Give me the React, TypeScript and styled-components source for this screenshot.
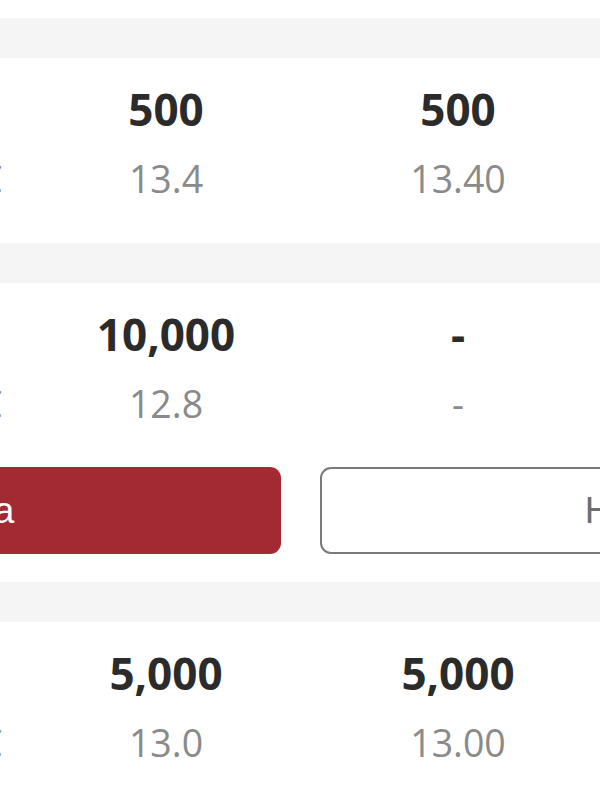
import React from 'react';
import styled, { createGlobalStyle } from 'styled-components';

const GlobalStyle = createGlobalStyle`
  html, body {
    margin: 0;
    padding: 0;
    background: #ffffff;
    overflow: hidden;
  }
  body {
    font-family: 'Open Sans', 'Noto Sans', sans-serif;
  }
`;

// 호가 행 데이터
interface IQuote {
  label: string;
  qtyA: string;
  priceA: string;
  qtyB: string;
  priceB: string;
}

const quotes: IQuote[] = [
  { label: 'Precio €', qtyA: '500', priceA: '13.4', qtyB: '500', priceB: '13.40' },
  { label: 'Precio €', qtyA: '10,000', priceA: '12.8', qtyB: '-', priceB: '-' },
  { label: 'Precio €', qtyA: '5,000', priceA: '13.0', qtyB: '5,000', priceB: '13.00' },
];

const QuoteRow: React.FC<{ quote: IQuote; bottom: number }> = ({ quote, bottom }) => (
  <SRow $bottom={bottom}>
    <LabelCell>
      <Primary />
      <Secondary>{quote.label}</Secondary>
    </LabelCell>
    <Cell>
      <Primary>{quote.qtyA}</Primary>
      <Secondary>{quote.priceA}</Secondary>
    </Cell>
    <Cell>
      <Primary>{quote.qtyB}</Primary>
      <Secondary>{quote.priceB}</Secondary>
    </Cell>
  </SRow>
);

const App = () => {
  return (
    <Page>
      <GlobalStyle />
      <Band />
      <QuoteRow quote={quotes[0]} bottom={36} />
      <Band />
      <QuoteRow quote={quotes[1]} bottom={35} />
      <ButtonRow>
        <ActionButton $variant="solid">Compra</ActionButton>
        <ActionButton $variant="outline">Historial</ActionButton>
      </ButtonRow>
      <Band />
      <QuoteRow quote={quotes[2]} bottom={36} />
    </Page>
  );
};

const Page = styled.main`
  width: 600px;
  min-height: 800px;
  padding-top: 18px;
  overflow: hidden;
  background: #ffffff;
`;

const Band = styled.div`
  height: 40px;
  background-color: #f5f5f5;
`;

const SRow = styled.section<{ $bottom: number }>`
  display: grid;
  grid-template-columns: 20px 292px 292px;
  padding: 23px 0 ${(p) => p.$bottom}px;
`;

const Cell = styled.div`
  display: flex;
  flex-direction: column;
  align-items: center;
  white-space: nowrap;
`;

const LabelCell = styled(Cell)`
  align-items: flex-end;
  padding-right: 18px;
  min-width: 0;
`;

const Primary = styled.div`
  height: 56px;
  line-height: 56px;
  font-size: 44px;
  font-weight: 700;
  color: #2b2b2b;
`;

const Secondary = styled.div`
  margin-top: 14px;
  height: 56px;
  line-height: 56px;
  font-size: 37.5px;
  font-weight: 400;
  color: #8a8a8a;
`;

const ButtonRow = styled.div`
  display: flex;
  justify-content: center;
  gap: 39px;
  margin-bottom: 28px;
`;

const ActionButton = styled.button<{ $variant: 'solid' | 'outline' }>`
  flex: 0 0 664px;
  height: 87px;
  box-sizing: border-box;
  border-radius: 11px;
  font-family: 'Liberation Sans', Arial, sans-serif;
  font-size: 37px;
  padding: 0;
  background: ${(p) => (p.$variant === 'solid' ? '#a32a33' : '#ffffff')};
  color: ${(p) => (p.$variant === 'solid' ? '#ffffff' : '#6f6f6f')};
  border: ${(p) => (p.$variant === 'solid' ? 'none' : '2.5px solid #7a7a7a')};
`;

export default App;
